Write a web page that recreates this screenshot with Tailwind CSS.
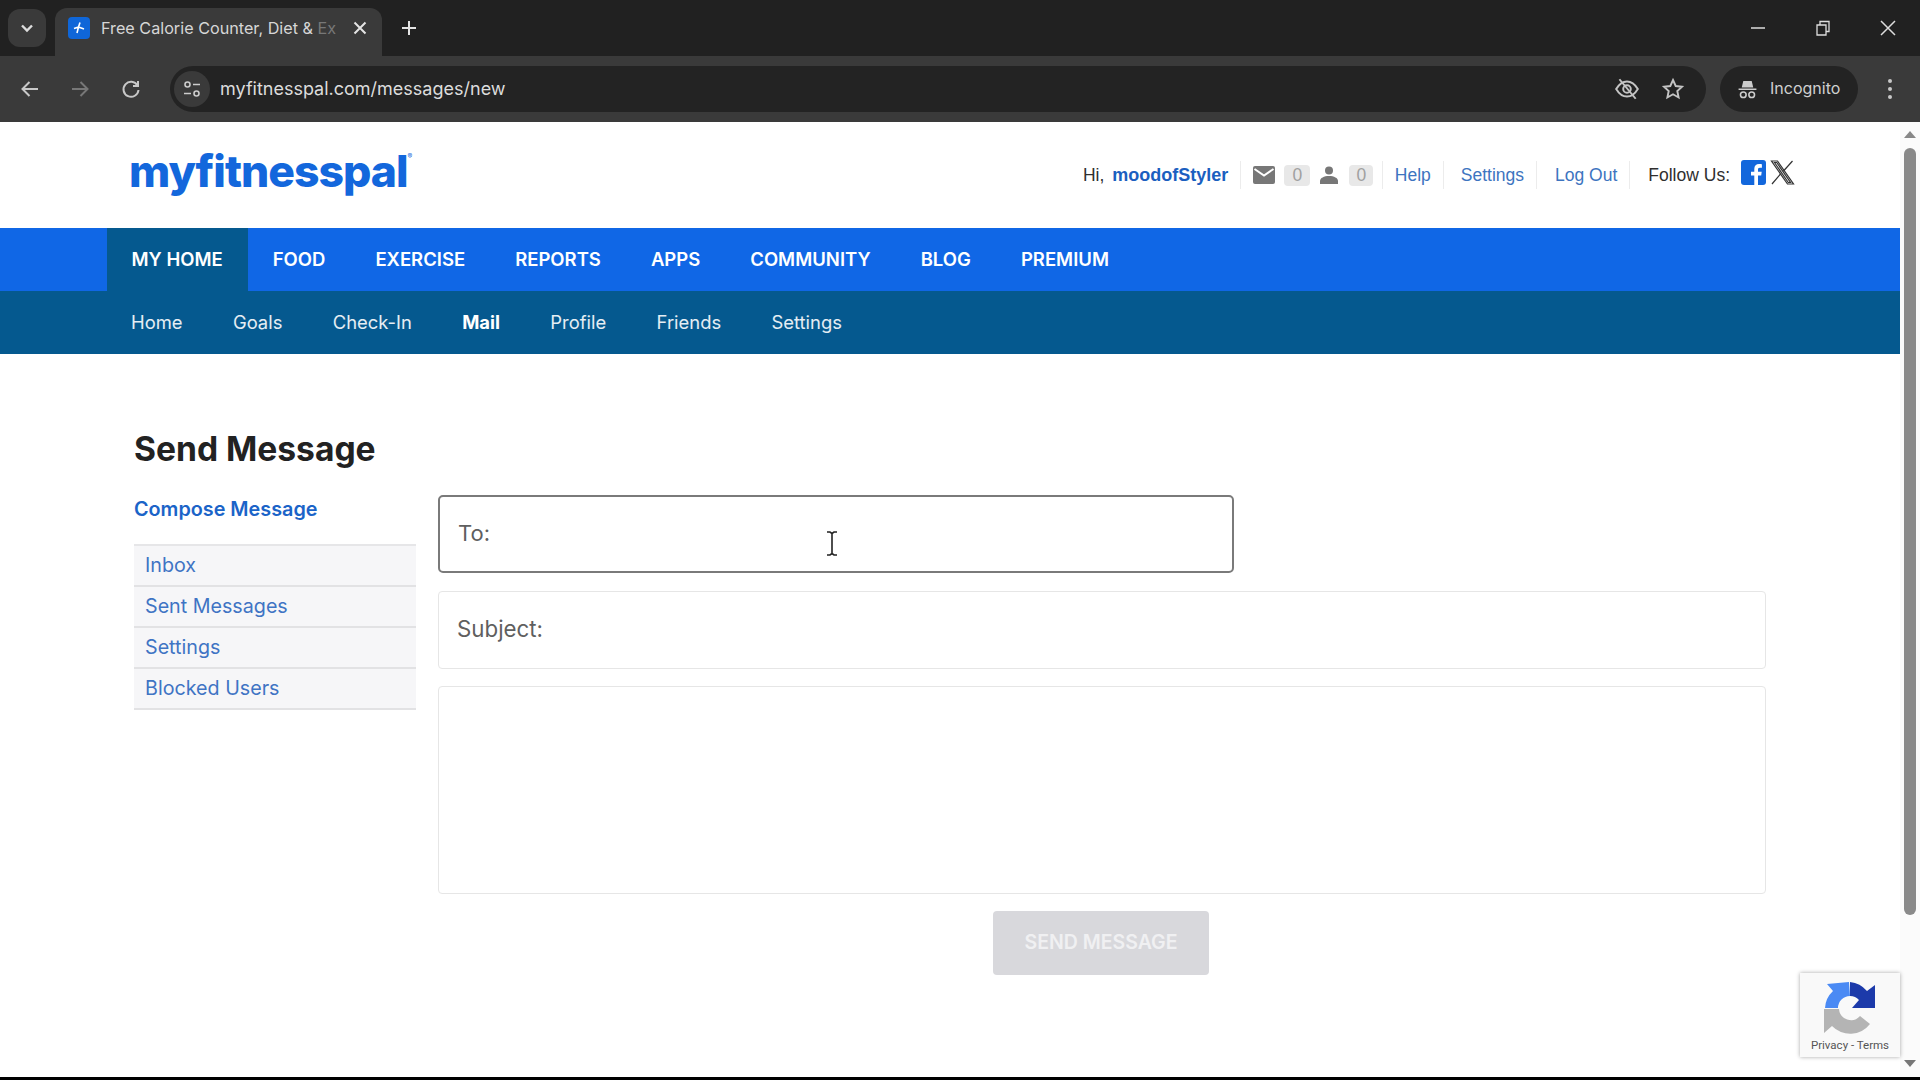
<!DOCTYPE html>
<html lang="en">
<head>
    <meta charset="UTF-8">
    <title>Send Message</title>
    <script src="https://cdn.jsdelivr.net/npm/@tailwindcss/browser@4"></script>
</head>
<body class="bg-black h-screen overflow-hidden font-['Inter',sans-serif]">
    <!-- tab strip -->
    <div class="h-[56px] bg-[#212121] flex items-end text-[#d8d8d8] relative">
        <div class="w-[38px] h-[38px] ml-2 mb-[9px] rounded-xl bg-[#3a3a3a] flex items-center justify-center">
            <svg class="w-4 h-4" viewBox="0 0 16 16" fill="none" stroke="#ddd" stroke-width="2.4"><path d="M3 5.5l5 5 5-5"/></svg>
        </div>
        <div class="ml-[9px] w-[327px] h-[48px] bg-[#3a3a3a] rounded-t-xl flex items-center pl-[13px] pb-[8px]">
            <div class="w-[22px] h-[22px] rounded-sm bg-[#0f66d8] flex items-center justify-center">
                <svg class="w-3.5 h-3.5" viewBox="0 0 14 14" fill="none" stroke="#fff" stroke-width="1.6"><path d="M8 1.5L6.5 6 2 7.5M6.5 6l5.5 2M6.500 6L5 12"/></svg>
            </div>
            <div class="ml-[11px] w-[236px] overflow-hidden whitespace-nowrap text-[16.200px] text-[#d6d6d6]">Free Calorie Counter, Diet &amp; <span class="text-[#777]">Ex</span></div>
            <svg class="w-4 h-4 ml-[15px]" viewBox="0 0 16 16" fill="none" stroke="#e4e4e4" stroke-width="2"><path d="M2.500 2.500l11 11M13.500 2.500l-11 11"/></svg>
        </div>
        <svg class="w-4 h-4 ml-[19px] mb-[20px]" viewBox="0 0 16 16" fill="none" stroke="#e4e4e4" stroke-width="2"><path d="M8 1v14M1 8h14"/></svg>
        <div class="ml-auto flex items-center mb-[20px] gap-[49px] pr-[24px]">
            <svg class="w-4 h-4" viewBox="0 0 16 16" fill="none" stroke="#ddd" stroke-width="1.5"><path d="M1 8h14"/></svg>
            <svg class="w-4 h-4" viewBox="0 0 16 16" fill="none" stroke="#ddd" stroke-width="1.3"><path d="M2 5h9v10H2zM5 5V1.500h9v10h-3"/></svg>
            <svg class="w-4 h-4" viewBox="0 0 16 16" fill="none" stroke="#ddd" stroke-width="1.5"><path d="M1 1l14 14M15 1L1 15"/></svg>
        </div>
    </div>
    <!-- toolbar -->
    <div class="h-[66px] bg-[#3a3a3a] flex items-center text-[#d8d8d8]">
        <svg class="w-5 h-5 ml-[20px]" viewBox="0 0 20 20" fill="none" stroke="#c8c8c8" stroke-width="2"><path d="M18 10H3M9.500 3L2.500 10l7 7"/></svg>
        <svg class="w-5 h-5 ml-[30px]" viewBox="0 0 20 20" fill="none" stroke="#777" stroke-width="2"><path d="M2 10h15M10.500 3l7 7-7 7"/></svg>
        <svg class="w-5 h-5 ml-[31px]" viewBox="0 0 20 20" fill="none" stroke="#c8c8c8" stroke-width="2"><path d="M16.500 6.500A7.500 7.500 0 1 0 17.500 11M17 2v5h-5"/></svg>
        <div class="ml-[29px] w-[1536px] h-[46px] rounded-full bg-[#232323] flex items-center pl-1">
            <div class="w-[36px] h-[36px] rounded-full bg-[#3a3a3a] flex items-center justify-center">
                <svg class="w-5 h-5" viewBox="0 0 20 20" fill="none" stroke="#ccc" stroke-width="1.6"><circle cx="5.500" cy="5.500" r="2.500"/><path d="M11 5.500h7M2 14.500h7"/><circle cx="14.500" cy="14.500" r="2.500"/></svg>
            </div>
            <span class="ml-[10px] -mt-[2px] text-[18px] text-[#dcdcdc]">myfitnesspal.com/messages/new</span>
            <svg class="w-[26px] h-[26px] ml-auto" viewBox="0 0 24 24" fill="none" stroke="#c4c4c4" stroke-width="1.8"><path d="M2 12c3-5 6.500-7 10-7s7 2 10 7c-3 5-6.500 7-10 7s-7-2-10-7z"/><circle cx="12" cy="12" r="3.500"/><path d="M5 3l15 18"/></svg>
            <svg class="w-[24px] h-[24px] ml-[21px] mr-[21px]" viewBox="0 0 24 24" fill="none" stroke="#c4c4c4" stroke-width="1.9"><path d="M12 3l2.700 6 6.300.7-4.700 4.300 1.300 6.500-5.600-3.200-5.600 3.200 1.300-6.500L3 9.700 9.300 9z"/></svg>
        </div>
        <div class="ml-[14px] w-[138px] h-[46px] rounded-full bg-[#232323] flex items-center pl-[17px]">
            <svg class="w-[21px] h-[21px]" viewBox="0 0 20 20" fill="#ccc"><path d="M6 2h8l1.500 6h-11zM1.500 9h17v1.500h-17z"/><circle cx="6" cy="15" r="2.700" fill="none" stroke="#ccc" stroke-width="1.500"/><circle cx="14" cy="15" r="2.700" fill="none" stroke="#ccc" stroke-width="1.500"/></svg>
            <span class="ml-[12px] -mt-[2px] text-[16px] text-[#d0d0d0]">Incognito</span>
        </div>
        <div class="ml-[30px] flex flex-col gap-[4px]">
            <span class="w-1 h-1 rounded-full bg-[#c8c8c8]"></span>
            <span class="w-1 h-1 rounded-full bg-[#c8c8c8]"></span>
            <span class="w-1 h-1 rounded-full bg-[#c8c8c8]"></span>
        </div>
    </div>

    <div class="h-[955px] flex bg-white relative">
        <div class="w-[1900px]">
            <!-- site header -->
            <div class="h-[106px] flex items-center pl-[129px] pr-[105px]">
                <span class="text-[44.500px] leading-none font-extrabold tracking-[-1px] text-[#1367dc] -mt-[8px]">myfitnesspal</span>
                <span class="text-[7px] text-[#1367dc] self-start mt-[30px]">®</span>
                <div class="ml-auto flex items-center text-[17.500px] text-[#2f2f2f] font-['Liberation_Sans',sans-serif]">
                    <span>Hi,</span>
                    <a class="ml-[8px] text-[18px] font-bold text-[#1b5fc0]">moodofStyler</a>
                    <span class="ml-[12px] w-px h-[28px] bg-[#ececec]"></span>
                    <svg class="ml-[12px] w-[22px] h-[18px]" viewBox="0 0 22 18"><rect width="22" height="18" rx="2" fill="#777"/><path d="M1.500 3l9.500 6.500L20.500 3" fill="none" stroke="#fff" stroke-width="2"/></svg>
                    <span class="ml-[9px] w-[26px] h-[21px] rounded-sm bg-[#e8e8e8] text-[#a0a0a0] flex items-center justify-center">0</span>
                    <svg class="ml-[10px] w-[18px] h-[18px]" viewBox="0 0 18 18" fill="#777"><circle cx="9" cy="4.500" r="4"/><path d="M0 18v-3c0-3 4-5 9-5s9 2 9 5v3z"/></svg>
                    <span class="ml-[11px] w-[24px] h-[21px] rounded-sm bg-[#e8e8e8] text-[#a0a0a0] flex items-center justify-center">0</span>
                    <span class="ml-[8.500px] w-px h-[28px] bg-[#ececec]"></span>
                    <a class="ml-[12px] text-[#3d74c0]">Help</a>
                    <span class="ml-[12px] w-px h-[28px] bg-[#ececec]"></span>
                    <a class="ml-[17px] text-[#3d74c0]">Settings</a>
                    <span class="ml-[12px] w-px h-[28px] bg-[#ececec]"></span>
                    <a class="ml-[18px] text-[#3d74c0]">Log Out</a>
                    <span class="ml-[12px] w-px h-[28px] bg-[#ececec]"></span>
                    <span class="ml-[18px] text-[#2f2f2f]">Follow Us:</span>
                    <svg class="ml-[11px] -mt-[5px] w-[25px] h-[25px]" viewBox="0 0 25 25"><rect width="25" height="25" rx="3" fill="#1367dc"/><path d="M17 25v-9.500h3.200l.5-3.800H17V9.500c0-1.100.4-1.800 1.900-1.800h2V4.300c-.4 0-1.500-.2-2.800-.2-2.900 0-4.800 1.700-4.800 4.900v2.700H10v3.800h3.300V25z" fill="#fff"/></svg>
                    <svg class="ml-[4px] -mt-[5px] w-[25px] h-[25px]" viewBox="0 0 25 25" fill="none" stroke="#333" stroke-width="1.200"><path d="M1.500 1h6l16 23h-6zM4.500 2.500l13.800 20h2.200L6.700 2.500z"/><path d="M22.500 1L13.500 11M10.500 14L2 24"/></svg>
                </div>
            </div>
            <!-- main nav -->
            <div class="h-[63px] bg-[#1067e6] flex pl-[106.500px] text-white text-[18.500px] font-semibold">
                <a class="px-[25px] flex items-center bg-[#05598f]">MY HOME</a>
                <a class="px-[25px] flex items-center">FOOD</a>
                <a class="px-[25px] flex items-center">EXERCISE</a>
                <a class="px-[25px] flex items-center">REPORTS</a>
                <a class="px-[25px] flex items-center">APPS</a>
                <a class="px-[25px] flex items-center">COMMUNITY</a>
                <a class="px-[25px] flex items-center">BLOG</a>
                <a class="px-[25px] flex items-center">PREMIUM</a>
            </div>
            <!-- sub nav -->
            <div class="h-[63px] bg-[#05598f] flex items-center pl-[131px] gap-[50.400px] text-white/90 text-[18.400px]">
                <a>Home</a>
                <a>Goals</a>
                <a>Check-In</a>
                <a class="font-bold text-white">Mail</a>
                <a>Profile</a>
                <a>Friends</a>
                <a>Settings</a>
            </div>
            <!-- content -->
            <div class="pl-[134px] pt-[73px]">
                <h1 class="text-[33.600px] leading-[44px] font-bold text-[#222]">Send Message</h1>
                <div class="mt-[24px] flex">
                    <div class="w-[282px]">
                        <a class="block h-[28px] leading-[29px] text-[19.800px] font-semibold text-[#1b64c8]">Compose Message</a>
                        <ul class="mt-[21px] border-t-2 border-[#e6e6e8] text-[19.700px] text-[#3f74c4]">
                            <li class="h-[41px] bg-[#f6f6f8] border-b-2 border-[#e2e2e4] pl-[11px] flex items-center">Inbox</li>
                            <li class="h-[41px] bg-[#f6f6f8] border-b-2 border-[#e2e2e4] pl-[11px] flex items-center">Sent Messages</li>
                            <li class="h-[41px] bg-[#f6f6f8] border-b-2 border-[#e2e2e4] pl-[11px] flex items-center">Settings</li>
                            <li class="h-[41px] bg-[#f6f6f8] border-b-2 border-[#e2e2e4] pl-[11px] flex items-center">Blocked Users</li>
                        </ul>
                    </div>
                    <div class="ml-[22px] w-[1328px] flex flex-col items-start">
                        <div class="w-[796px] h-[78px] border-2 border-[#7a7a7a] rounded-[5px] flex items-center pl-[18px] pb-[2px] text-[22px] text-[#5f5f5f]">To:</div>
                        <div class="mt-[18px] w-full h-[78px] border border-[#e6e6e6] rounded-[4px] flex items-center pl-[18px] pb-[2px] text-[22.300px] text-[#5f5f5f]">Subject:</div>
                        <div class="mt-[17px] w-full h-[208px] border border-[#e6e6e6] rounded-[4px]"></div>
                        <button class="mt-[17px] ml-[555px] w-[216px] h-[64px] rounded-[4px] bg-[#d8d8dc] text-[#f0f0f2] text-[19.500px] font-semibold">SEND MESSAGE</button>
                    </div>
                </div>
            </div>
        </div>
        <!-- scrollbar -->
        <div class="w-[20px] flex flex-col items-center bg-[#fbfbfb]">
            <div class="mt-[9px] w-0 h-0 border-x-[6px] border-x-transparent border-b-[7px] border-b-[#888]"></div>
            <div class="mt-[10px] w-[12px] h-[767px] rounded-full bg-[#8a8a8a]"></div>
            <div class="mt-auto mb-[10px] w-0 h-0 border-x-[6px] border-x-transparent border-t-[7px] border-t-[#777]"></div>
        </div>
        <!-- text cursor -->
        <svg class="absolute left-[826px] top-[409px] w-[12px] h-[25px]" viewBox="0 0 12 25" fill="none" stroke="#222" stroke-width="1.600"><path d="M1 1h3l2 1.500L8 1h3M6 2.500v20M1 24h3l2-1.500L8 24h3"/></svg>
        <!-- recaptcha -->
        <div class="absolute left-[1800px] top-[851px] w-[100px] h-[84px] bg-[#f9f9f9] shadow-[0_0_4px_rgba(0,0,0,0.35)] flex flex-col items-center">
            <svg class="mt-[9px] w-[52px] h-[52px]" viewBox="0 0 52 52">
                <path d="M1 26A25 25 0 0 1 9 9L3 2 25 0 26 14A12 12 0 0 0 14 26Z" fill="#4a8af4"/>
                <path d="M26 0A26 26 0 0 1 43 9L51 3V26H28L35 18A12 12 0 0 0 26 14Z" fill="#1c3aaa"/>
                <path d="M0 27V51L8 44A25 25 0 0 0 46 42L36 34A12 12 0 0 1 15 27Z" fill="#b4b4b4"/>
            </svg>
            <span class="mt-[6px] text-[11.500px] leading-none text-[#555] font-['Roboto',sans-serif]">Privacy - Terms</span>
        </div>
    </div>
</body>
</html>
